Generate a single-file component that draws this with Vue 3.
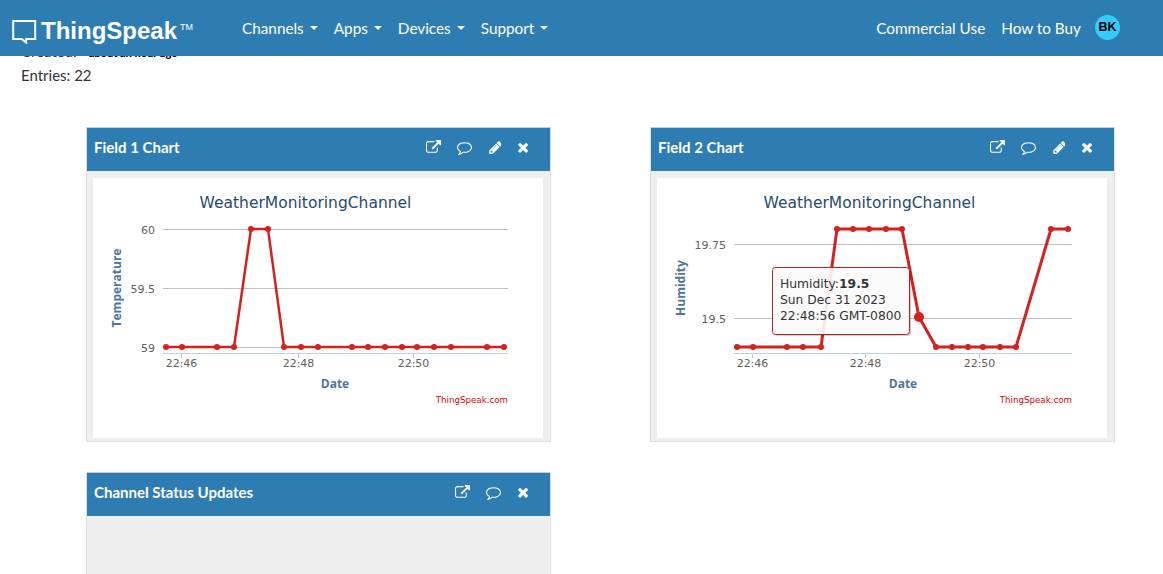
<template>
  <div class="page">
    <header class="topbar">
      <a class="brand">
        <svg class="brand-mark" width="25" height="25" viewBox="0 0 25 25">
          <path d="M1.2 2h22v18H18l-2.8 0-1 0v3.6L9.6 20H1.2z" fill="none" stroke="#fff" stroke-width="2" />
        </svg>
        <span class="brand-name">ThingSpeak</span><span class="brand-tm">TM</span>
      </a>
      <nav class="menu">
        <a v-for="item in menu" :key="item" class="menu-item">{{ item }}<i class="caret"></i></a>
      </nav>
      <div class="links">
        <a>Commercial Use</a>
        <a>How to Buy</a>
        <span class="avatar">BK</span>
      </div>
    </header>

    <main class="content">
      <div class="meta">
        <div>Created: <strong class="created">about an hour ago</strong></div>
        <div>Entries: 22</div>
      </div>

      <div class="cards">
        <section v-for="chart in charts" :key="chart.name" class="card">
          <div class="card-head">
            <h3>{{ chart.name }}</h3>
            <div class="tools">
              <svg class="i15" viewBox="0 0 1792 1792"><path :d="icons.link" /></svg>
              <svg class="i15" viewBox="0 0 1792 1792"><path :d="icons.comment" /></svg>
              <svg class="i13" viewBox="0 0 1515 1792"><path :d="icons.pencil" /></svg>
              <svg class="i11" viewBox="160 250 1330 1330"><path :d="icons.times" /></svg>
            </div>
          </div>
          <div class="card-body">
            <svg class="plot" width="450" height="260" viewBox="0 0 450 260">
              <text x="212.5" y="30" text-anchor="middle" class="plot-title">WeatherMonitoringChannel</text>

              <template v-for="g in chart.grid" :key="g.label">
                <line :x1="chart.left" x2="415" :y1="g.y" :y2="g.y" stroke="#c0c0c0" />
                <text :x="chart.left - 8" :y="g.y + 4" text-anchor="end" class="tick">{{ g.label }}</text>
              </template>

              <line :x1="chart.left" x2="415" y1="175.5" y2="175.5" stroke="#c0d0e0" />
              <template v-for="t in chart.ticks" :key="t.label">
                <line :x1="t.x" :x2="t.x" y1="175" y2="180" stroke="#c0d0e0" />
                <text :x="t.x" y="188.5" text-anchor="middle" class="tick">{{ t.label }}</text>
              </template>

              <text :x="chart.dateX" y="210" text-anchor="middle" class="axis-title">Date</text>
              <text
                text-anchor="middle"
                class="axis-title"
                :transform="`translate(${chart.titleX} ${chart.titleY}) rotate(-90)`"
              >{{ chart.yTitle }}</text>

              <polyline
                :points="chart.points.map((p) => p.join(',')).join(' ')"
                fill="none"
                stroke="#d62020"
                :stroke-width="chart.tip ? 3 : 2.5"
              />
              <circle v-for="p in chart.points" :key="p[0]" :cx="p[0]" :cy="p[1]" r="3" fill="#d62020" />
              <text x="415" y="225" text-anchor="end" class="credit">ThingSpeak.com</text>

              <g v-if="chart.tip">
                <circle :cx="chart.tip.x" :cy="chart.tip.y" r="5" fill="#d62020" />
                <rect x="115.5" y="89.5" width="137" height="67" rx="3" fill="#000" opacity=".18" transform="translate(1.5 1.5)" />
                <rect x="115.5" y="89.5" width="137" height="67" rx="3" fill="#fff" fill-opacity=".9" stroke="#c51d1d" />
                <text x="123" y="110" class="tip">Humidity:<tspan class="tip-strong">19.5</tspan></text>
                <text x="123" y="126" class="tip">Sun Dec 31 2023</text>
                <text x="123" y="142" class="tip">22:48:56 GMT-0800</text>
              </g>
            </svg>
          </div>
        </section>

        <section class="card card-status">
          <div class="card-head">
            <h3>Channel Status Updates</h3>
            <div class="tools">
              <svg class="i15" viewBox="0 0 1792 1792"><path :d="icons.link" /></svg>
              <svg class="i15" viewBox="0 0 1792 1792"><path :d="icons.comment" /></svg>
              <svg class="i11" viewBox="160 250 1330 1330"><path :d="icons.times" /></svg>
            </div>
          </div>
          <div class="card-body"></div>
        </section>
      </div>
    </main>
  </div>
</template>

<script setup>
const menu = ['Channels', 'Apps', 'Devices', 'Support']

const icons = {
  link: 'M1408 928v320q0 119-84.5 203.5t-203.5 84.5h-832q-119 0-203.5-84.5t-84.5-203.5v-832q0-119 84.5-203.5t203.5-84.5h704q14 0 23 9t9 23v64q0 14-9 23t-23 9h-704q-66 0-113 47t-47 113v832q0 66 47 113t113 47h832q66 0 113-47t47-113v-320q0-14 9-23t23-9h64q14 0 23 9t9 23zm384-864v512q0 26-19 45t-45 19-45-19l-176-176-652 652q-10 10-23 10t-23-10l-114-114q-10-10-10-23t10-23l652-652-176-176q-19-19-19-45t19-45 45-19h512q26 0 45 19t19 45z',
  comment: 'M896 384q-204 0-381.5 69.5t-282 187.5-104.5 255q0 112 71.5 213.5t201.5 175.5l87 50-27 96q-24 91-70 172 152-63 275-171l43-38 57 6q69 8 130 8 204 0 381.5-69.5t282-187.5 104.5-255-104.5-255-282-187.5-381.5-69.5zm896 512q0 174-120 321.5t-326 233-450 85.5q-70 0-145-8-198 175-460 242-49 14-114 22h-5q-15 0-27-10.5t-16-27.5v-1q-3-4-.5-12t2-10 4.5-9.5l6-9 7-8.5 8-9q7-8 31-34.5t34.5-38 31-39.5 32.5-51 27-59 26-76q-157-89-247.5-220t-90.5-281q0-174 120-321.5t326-233 450-85.5 450 85.5 326 233 120 321.5z',
  pencil: 'M491 1536l91-91-235-235-91 91v107h128v128h107zm523-928q0-22-22-22-10 0-17 7l-542 542q-7 7-7 17 0 22 22 22 10 0 17-7l542-542q7-7 7-17zm-54-192l416 416-832 832h-416v-416zm683 96q0 53-37 90l-166 166-416-416 166-165q36-38 90-38 53 0 91 38l235 234q37 39 37 91z',
  times: 'M1490 1322q0 40-28 68l-136 136q-28 28-68 28t-68-28l-294-294-294 294q-28 28-68 28t-68-28l-136-136q-28-28-28-68t28-68l294-294-294-294q-28-28-28-68t28-68l136-136q28-28 68-28t68 28l294 294 294-294q28-28 68-28t68 28l136 136q28 28 28 68t-28 68l-294 294 294 294q28 28 28 68z',
}

const row = (xs, y) => xs.map((x) => [x, y])

const charts = [
  {
    name: 'Field 1 Chart',
    yTitle: 'Temperature',
    left: 70,
    dateX: 242,
    titleX: 28,
    titleY: 110,
    grid: [
      { label: '60', y: 51.5 },
      { label: '59.5', y: 110.5 },
      { label: '59', y: 169.5 },
    ],
    ticks: [
      { label: '22:46', x: 88.5 },
      { label: '22:48', x: 205.5 },
      { label: '22:50', x: 320.5 },
    ],
    points: [
      ...row([73, 89, 124, 141], 169),
      ...row([158, 175], 51),
      ...row([191, 208, 225, 259, 275, 292, 309, 324, 341, 358, 394, 411], 169),
    ],
  },
  {
    name: 'Field 2 Chart',
    yTitle: 'Humidity',
    left: 77,
    dateX: 246,
    titleX: 28,
    titleY: 110,
    grid: [
      { label: '19.75', y: 66.5 },
      { label: '19.5', y: 140.5 },
    ],
    ticks: [
      { label: '22:46', x: 95.5 },
      { label: '22:48', x: 208.5 },
      { label: '22:50', x: 322.5 },
    ],
    points: [
      ...row([80, 96, 130, 146, 164], 169),
      ...row([180, 196, 212, 229, 245], 51),
      [262, 139],
      ...row([279, 295, 311, 326, 343, 359], 169),
      ...row([394, 411], 51),
    ],
    tip: { x: 262, y: 139 },
  },
]
</script>

<style scoped>
.page {
  height: 574px;
  overflow: hidden;
  background: #fff;
  color: #333;
  font-family: Lato, sans-serif;
}

.topbar {
  position: fixed;
  top: 0;
  left: 0;
  right: 0;
  height: 56px;
  z-index: 5;
  display: flex;
  align-items: center;
  background: #2e7db2;
  color: #fff;
  font-size: 15.3px;
}

.brand {
  display: flex;
  align-items: flex-start;
  width: 242px;
  padding: 5px 0 0 12px;
  box-sizing: border-box;
}

.brand-mark {
  margin-top: 1px;
}

.brand-name {
  margin-left: 4px;
  font-family: "Liberation Sans", sans-serif;
  font-weight: 700;
  font-size: 24px;
  line-height: 26px;
}

.brand-tm {
  margin-left: 3px;
  font-family: "Liberation Sans", sans-serif;
  font-size: 9px;
  line-height: 18px;
}

.menu {
  display: flex;
  gap: 16px;
  padding-bottom: 1px;
}

.menu-item {
  display: flex;
  align-items: center;
}

.caret {
  margin-left: 6px;
  border-top: 4.5px solid #fff;
  border-left: 4.5px solid transparent;
  border-right: 4.5px solid transparent;
}

.links {
  margin-left: auto;
  margin-right: 43px;
  display: flex;
  align-items: center;
  gap: 16px;
  padding-bottom: 1px;
}

.avatar {
  width: 25px;
  height: 25px;
  margin-left: -2px;
  border-radius: 50%;
  background: #33ccff;
  color: #000;
  font-family: "Liberation Sans", sans-serif;
  font-size: 12.5px;
  font-weight: 700;
  line-height: 25px;
  text-align: center;
}

.content {
  padding: 40px 0 0 21px;
}

.meta {
  font-size: 15px;
  line-height: 23px;
}

.created {
  margin-left: 8px;
  color: #000;
  font-size: 11px;
  font-weight: 900;
}

.cards {
  display: grid;
  grid-template-columns: 465px 465px;
  column-gap: 99px;
  row-gap: 30px;
  margin: 40px 0 0 65px;
}

.card {
  border: 1px solid #ddd;
  border-top-color: #ccc;
}

.card-head {
  height: 43px;
  display: flex;
  align-items: center;
  justify-content: space-between;
  padding: 0 22px 5px 7px;
  box-sizing: border-box;
  background: #2e7db2;
  color: #fff;
}

.card-head h3 {
  margin: 0;
  font-family: Lato, sans-serif;
  font-size: 15px;
  font-weight: 700;
}

.tools {
  display: flex;
  align-items: center;
  gap: 16px;
}

.tools svg {
  fill: #fff;
}

.i15 {
  width: 15px;
  height: 15px;
}

.i13 {
  width: 13px;
  height: 15px;
}

.i11 {
  width: 11px;
  height: 11px;
}

.card-body {
  height: 270px;
  padding: 7px 7px 3px 6px;
  box-sizing: border-box;
  background: #eee;
}

.card-status .card-body {
  height: 200px;
}

.plot {
  display: block;
  background: #fff;
  font-family: "DejaVu Sans", sans-serif;
}

.plot-title {
  font-size: 15.5px;
  fill: #274b6d;
}

.tick {
  font-size: 11px;
  fill: #606060;
}

.axis-title {
  font-family: "Open Sans", sans-serif;
  font-size: 12px;
  font-weight: 700;
  fill: #4d759e;
}

.credit {
  font-size: 8.7px;
  fill: #e00000;
}

.tip {
  font-size: 12.3px;
  fill: #333;
}

.tip-strong {
  font-weight: 700;
}
</style>

<style>
html,
body {
  overflow: hidden;
}
</style>
